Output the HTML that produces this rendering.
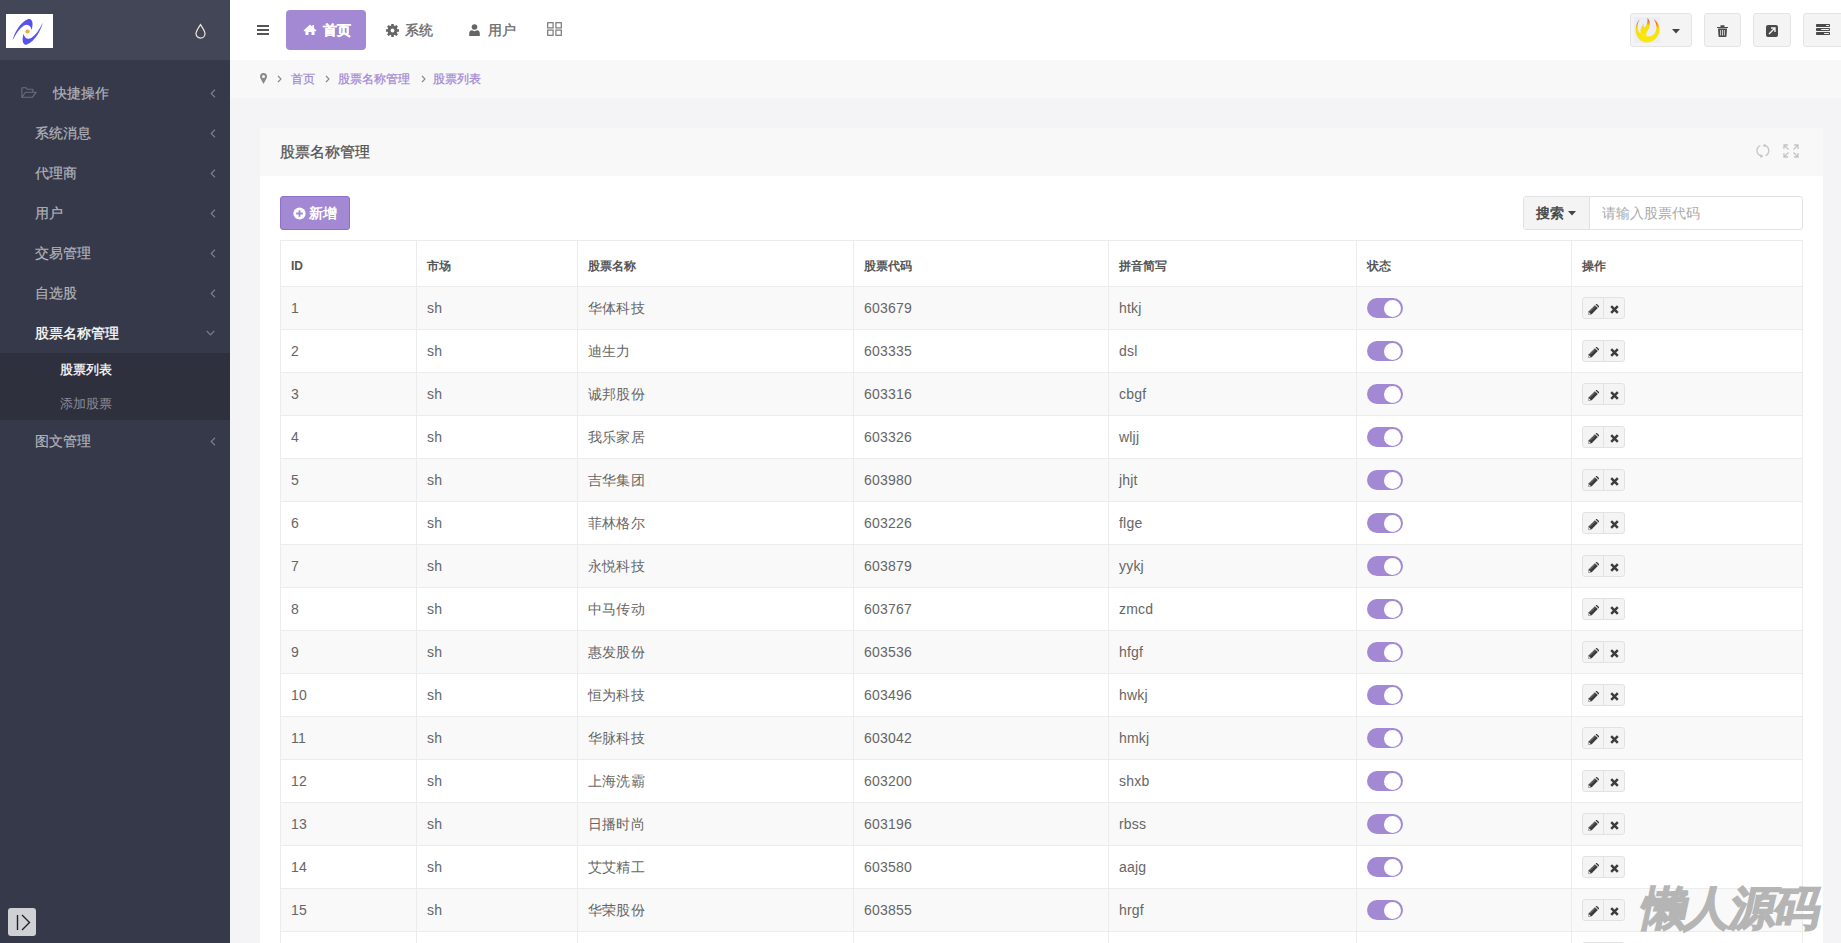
<!DOCTYPE html>
<html><head><meta charset="utf-8"><style>
*{box-sizing:border-box;margin:0;padding:0}
html,body{width:1841px;height:943px;overflow:hidden}
body{position:relative;background:#f4f4f6;font-family:"Liberation Sans",sans-serif;font-size:14px;color:#666}
.abs{position:absolute}
#side{position:absolute;left:0;top:0;width:230px;height:943px;background:#363949}
#logo{position:absolute;left:0;top:0;width:230px;height:60px;background:#434656}
#logo .box{position:absolute;left:6px;top:14px;width:47px;height:34px;background:#fff}
#logo .drop{position:absolute;left:194px;top:23px}
.mi{position:absolute;left:0;width:230px;height:40px;line-height:42px;color:#b2b3ba;font-size:14px;-webkit-text-stroke:.2px #b2b3ba}
.mi span{position:absolute;left:35px;top:0}
.mi .chev{position:absolute;left:210px;top:17px}
.mi.act span{color:#fff}
.sub{position:absolute;left:0;top:353px;width:230px;height:67px;background:#2e303e}
.si{position:absolute;left:60px;font-size:13px;height:34px;line-height:34px}
#tog{position:absolute;left:8px;top:908px;width:28px;height:28px;background:#d0d1d5;border-radius:3px}
#hdr{position:absolute;left:230px;top:0;width:1611px;height:60px;background:#fff}
.nav{position:absolute;top:10px;height:40px;line-height:40px;font-size:14px;color:#666}
.nav.act{background:#a389d4;color:#fff;border-radius:4px;font-weight:bold}
.hb{position:absolute;top:13px;height:34px;background:#f4f4f4;border:1px solid #e4e4e4;border-radius:3px}
#crumb{position:absolute;left:230px;top:60px;width:1611px;height:38px;background:#f8f8f9;font-size:12px;color:#a389d4;-webkit-text-stroke:.25px #a389d4}
#panel{position:absolute;left:260px;top:128px;width:1563px;height:815px;background:#fff}
#ph{position:absolute;left:0;top:0;width:1563px;height:48px;background:#f8f8f8}
#ph .t{position:absolute;left:20px;top:0;line-height:48px;font-size:15px;color:#555;-webkit-text-stroke:.3px #555}
#addbtn{position:absolute;left:280px;top:196px;width:70px;height:34px;background:#a389d4;border:1px solid #8d70cb;border-radius:3px;color:#fff;font-weight:bold;font-size:14px}
#search{position:absolute;left:1523px;top:196px;width:280px;height:34px;border:1px solid #e2e2e2;border-radius:3px;background:#fff}
#search .b{position:absolute;left:0;top:0;width:66px;height:32px;background:#f4f4f4;border-right:1px solid #e2e2e2;color:#444;line-height:32px;-webkit-text-stroke:.5px #444}
#search .p{position:absolute;left:78px;top:0;line-height:32px;color:#aaa}
.tbl{position:absolute;left:280px;top:240px;width:1523px;height:703px;border-left:1px solid #ececec;border-right:1px solid #ececec}
.thead{position:absolute;left:0;top:0;width:1521px;height:47px;border-top:1px solid #ececec;border-bottom:1px solid #ececec;background:#fff}
.th{position:absolute;top:3px;line-height:45px;font-size:12px;font-weight:bold;color:#555}
.vl{position:absolute;top:0;width:1px;height:100%;background:#ececec}
.tr{position:absolute;left:0;width:1521px;height:43px;border-bottom:1px solid #ececec;background:#fff}
.tr.odd{background:#f9f9f9}
.td{position:absolute;top:0;line-height:42px;font-size:14px;color:#666;letter-spacing:.2px}
.sw{position:absolute;top:11px;width:36px;height:20px;border-radius:10px;background:#a389d4}
.sw i{position:absolute;right:2px;top:1.5px;width:17px;height:17px;border-radius:50%;background:#fff}
.acts{position:absolute;top:10px;width:43px;height:22px;border:1px solid #e2e2e2;border-radius:3px;background:#f4f4f4}
.acts b{position:absolute;top:0;height:20px;width:21px;display:flex;align-items:center;justify-content:center;padding-top:2px}
.acts .ed{left:0;border-right:1px solid #e2e2e2}
.acts .rm{left:21px}
#wm{position:absolute;left:1642px;top:878px;font-size:46px;font-weight:900;color:#b5b5b5;letter-spacing:-1.5px;transform:skewX(-12deg);-webkit-text-stroke:1.6px #b5b5b5}

</style></head><body>
<div id="side">
  <div id="logo">
    <div class="box"><svg width="47" height="34" viewBox="0 0 47 34"><g fill="#5552ee"><path d="M6.4 26.8 C8 20 14 8 22.3 5.1 C26.2 3.7 27.8 9.5 25.5 15.9 C25 11.8 21.5 9.3 17.6 11.8 C13.5 14.5 10 19.5 6.4 26.8 Z"/><path d="M6.4 26.8 C8 20 14 8 22.3 5.1 C26.2 3.7 27.8 9.5 25.5 15.9 C25 11.8 21.5 9.3 17.6 11.8 C13.5 14.5 10 19.5 6.4 26.8 Z" transform="rotate(180 21.6 17.8)"/></g><circle cx="21.5" cy="17.5" r="2.1" fill="#e9aa45"/></svg></div>
    <div class="drop"><svg width="13" height="16" viewBox="0 0 13 16"><path d="M6.5 1.6 Q11 8.2 11 10.6 A4.5 4.5 0 0 1 2 10.6 Q2 8.2 6.5 1.6 Z" fill="none" stroke="#eeeae0" stroke-width="1.2"/></svg></div>
  </div>
  <div class="mi" style="top:72px"><svg class="abs" style="left:21px;top:15px" width="16" height="12" viewBox="0 0 16 12"><g fill="none" stroke="#6c6e7c" stroke-width="1.1" stroke-linejoin="round"><path d="M.9 10.3 V1.5 Q.9 .8 1.6 .8 H5.2 L6.2 2.2 H11.2 Q11.9 2.2 11.9 2.9 V5.2"/><path d="M.9 10.3 L4.5 5.2 H15.2 L11.4 10.3 Z"/></g></svg><span style="left:53px">快捷操作</span><svg class="chev" width="6" height="9" viewBox="0 0 6 9"><path d="M5 .8 L1.2 4.5 L5 8.2" fill="none" stroke="#7b7d8a" stroke-width="1.2"/></svg></div>
  <div class="mi" style="top:112px"><span>系统消息</span><svg class="chev" width="6" height="9" viewBox="0 0 6 9"><path d="M5 .8 L1.2 4.5 L5 8.2" fill="none" stroke="#7b7d8a" stroke-width="1.2"/></svg></div>
  <div class="mi" style="top:152px"><span>代理商</span><svg class="chev" width="6" height="9" viewBox="0 0 6 9"><path d="M5 .8 L1.2 4.5 L5 8.2" fill="none" stroke="#7b7d8a" stroke-width="1.2"/></svg></div>
  <div class="mi" style="top:192px"><span>用户</span><svg class="chev" width="6" height="9" viewBox="0 0 6 9"><path d="M5 .8 L1.2 4.5 L5 8.2" fill="none" stroke="#7b7d8a" stroke-width="1.2"/></svg></div>
  <div class="mi" style="top:232px"><span>交易管理</span><svg class="chev" width="6" height="9" viewBox="0 0 6 9"><path d="M5 .8 L1.2 4.5 L5 8.2" fill="none" stroke="#7b7d8a" stroke-width="1.2"/></svg></div>
  <div class="mi" style="top:272px"><span>自选股</span><svg class="chev" width="6" height="9" viewBox="0 0 6 9"><path d="M5 .8 L1.2 4.5 L5 8.2" fill="none" stroke="#7b7d8a" stroke-width="1.2"/></svg></div>
  <div class="mi act" style="top:312px"><span style="-webkit-text-stroke:.3px #fff">股票名称管理</span><svg class="abs" style="left:206px;top:18px" width="9" height="6" viewBox="0 0 9 6"><path d="M.8 1 L4.5 4.8 L8.2 1" fill="none" stroke="#7b7d8a" stroke-width="1.2"/></svg></div>
  <div class="sub">
    <div class="si" style="top:0;color:#fff;-webkit-text-stroke:.25px #fff">股票列表</div>
    <div class="si" style="top:34px;color:#8a8b94">添加股票</div>
  </div>
  <div class="mi" style="top:420px"><span>图文管理</span><svg class="chev" width="6" height="9" viewBox="0 0 6 9"><path d="M5 .8 L1.2 4.5 L5 8.2" fill="none" stroke="#7b7d8a" stroke-width="1.2"/></svg></div>
  <div id="tog"><svg class="abs" style="left:0;top:0" width="28" height="28" viewBox="0 0 28 28"><path d="M9.5 7 V22" stroke="#222" stroke-width="1.4"/><path d="M14 7 L21.5 14.5 L14 22" fill="none" stroke="#222" stroke-width="1.4"/></svg></div>
</div>

<div id="hdr">
  <svg class="abs" style="left:27px;top:25px" width="12" height="10" viewBox="0 0 12 10"><path d="M0 1 H12 M0 5 H12 M0 9 H12" stroke="#555" stroke-width="1.8"/></svg>
  <div class="nav act" style="left:56px;width:80px;-webkit-text-stroke:.3px #fff"><svg class="abs" style="left:17px;top:14px" width="14" height="11" viewBox="0 0 14 11"><path d="M7 .5 L.5 6.5 L1.6 7.5 L2.5 6.8 V11 H5.5 V8 H8.5 V11 H11.5 V6.8 L12.4 7.5 L13.5 6.5 L11 4.2 V1 H9.5 V2.8 Z" fill="#fff"/></svg><span class="abs" style="left:37px;top:0">首页</span></div>
  <div class="nav" style="left:156px;width:60px;-webkit-text-stroke:.3px #666"><svg class="abs" style="left:0;top:14px" width="13" height="13" viewBox="0 0 13 13"><g fill="#666"><circle cx="6.5" cy="6.5" r="4.9"/><rect x="5.2" y="-.1" width="2.6" height="13.2" rx=".5" transform="rotate(0 6.5 6.5)"/><rect x="5.2" y="-.1" width="2.6" height="13.2" rx=".5" transform="rotate(45 6.5 6.5)"/><rect x="5.2" y="-.1" width="2.6" height="13.2" rx=".5" transform="rotate(90 6.5 6.5)"/><rect x="5.2" y="-.1" width="2.6" height="13.2" rx=".5" transform="rotate(135 6.5 6.5)"/></g><circle cx="6.5" cy="6.5" r="1.9" fill="#fff"/></svg><span class="abs" style="left:19px;top:0">系统</span></div>
  <div class="nav" style="left:239px;width:60px;-webkit-text-stroke:.3px #666"><svg class="abs" style="left:0;top:14px" width="11" height="12" viewBox="0 0 11 12"><circle cx="5.5" cy="3" r="2.8" fill="#666"/><path d="M.2 12 V9.5 Q.2 6.5 3 6.3 L5.5 7.3 L8 6.3 Q10.8 6.5 10.8 9.5 V12 Z" fill="#666"/></svg><span class="abs" style="left:19px;top:0">用户</span></div>
  <svg class="abs" style="left:317px;top:22px" width="15" height="14" viewBox="0 0 15 14"><g fill="none" stroke="#777" stroke-width="1.2"><rect x=".7" y=".7" width="5.4" height="5.2"/><rect x="8.9" y=".7" width="5.4" height="5.2"/><rect x=".7" y="8.1" width="5.4" height="5.2"/><rect x="8.9" y="8.1" width="5.4" height="5.2"/></g></svg>
  <div class="hb" style="left:1400px;width:62px"><div class="abs" style="left:3px;top:3px;width:26px;height:26px;background:#eaeff6"><svg width="26" height="26" viewBox="0 0 26 26"><defs><linearGradient id="fl" x1="0" y1="0" x2="0" y2="1"><stop offset="0" stop-color="#e5480f"/><stop offset=".18" stop-color="#f07a14"/><stop offset=".4" stop-color="#fad80c"/><stop offset="1" stop-color="#fbea0a"/></linearGradient></defs><g fill="url(#fl)"><path d="M6 2 C1.5 6.5 .3 13 2.8 18.5 C5 23.5 9 25.5 13 25.5 C19 25.5 23.8 21 25.2 15 C26.2 10 24 5 19.7 2 C22.5 6 23.2 11 21.5 15 C19.5 19 16 20 13 19.5 C8.5 19 5 16.5 3.9 12.5 C3 9 3.8 5 6 2 Z"/><path d="M13.5 1 C16.5 4 17 9 13.8 13.5 C11.8 16 11.8 18 13.3 19.6 L7.8 19.6 C6 17 6 13.5 7.3 10.5 L9.6 6.6 C9.4 8.4 9.7 9.8 10.6 10.6 C13.2 8 13.8 4.2 13.5 1 Z"/></g></svg></div><svg class="abs" style="left:41px;top:15px" width="8" height="5" viewBox="0 0 8 5"><path d="M0 0 H8 L4 4.5 Z" fill="#444"/></svg></div>
  <div class="hb" style="left:1474px;width:37px"><svg class="abs" style="left:12px;top:11px" width="11" height="12" viewBox="0 0 11 12"><path d="M0 2 H11 V3 H0 Z M3.5 .2 H7.5 V2 H3.5 Z M1 3.5 H10 L9.5 11.2 Q9.4 12 8.6 12 H2.4 Q1.6 12 1.5 11.2 Z" fill="#4a4a4a"/><path d="M3.6 5 V10.5 M5.5 5 V10.5 M7.4 5 V10.5" stroke="#f4f4f4" stroke-width=".8"/></svg></div>
  <div class="hb" style="left:1523px;width:38px"><svg class="abs" style="left:12px;top:11px" width="12" height="12" viewBox="0 0 12 12"><rect x="0" y="0" width="12" height="12" rx="2" fill="#4a4a4a"/><path d="M3 9 L8.5 3.5 M5 3 H9 V7" fill="none" stroke="#f4f4f4" stroke-width="1.4"/></svg></div>
  <div class="hb" style="left:1573px;width:50px"><svg class="abs" style="left:12px;top:10px" width="14" height="12" viewBox="0 0 14 12"><g fill="#4a4a4a"><rect x="0" y="0" width="14" height="3" rx=".8"/><rect x="0" y="4" width="14" height="3" rx=".8"/><rect x="0" y="8" width="14" height="3" rx=".8"/></g><g fill="#f4f4f4"><rect x="10" y="1" width="3" height="1" rx=".5"/><rect x="5" y="5" width="8" height="1" rx=".5"/><rect x="8" y="9" width="5" height="1" rx=".5"/></g></svg></div>
</div>

<div id="crumb">
  <svg class="abs" style="left:30px;top:13px" width="7" height="11" viewBox="0 0 7 11"><path d="M3.5 11 L.8 6 Q0 4.6 0 3.5 A3.5 3.5 0 0 1 7 3.5 Q7 4.6 6.2 6 Z" fill="#8a8a8a"/><circle cx="3.5" cy="3.4" r="1.5" fill="#f8f8f9"/></svg>
  <svg class="abs" style="left:47px;top:15px" width="5" height="8" viewBox="0 0 5 8"><path d="M1 1 L4 4 L1 7" fill="none" stroke="#888" stroke-width="1.1"/></svg>
  <span class="abs" style="left:61px;top:11px">首页</span>
  <svg class="abs" style="left:95px;top:15px" width="5" height="8" viewBox="0 0 5 8"><path d="M1 1 L4 4 L1 7" fill="none" stroke="#888" stroke-width="1.1"/></svg>
  <span class="abs" style="left:108px;top:11px">股票名称管理</span>
  <svg class="abs" style="left:191px;top:15px" width="5" height="8" viewBox="0 0 5 8"><path d="M1 1 L4 4 L1 7" fill="none" stroke="#888" stroke-width="1.1"/></svg>
  <span class="abs" style="left:203px;top:11px">股票列表</span>
</div>

<div id="panel">
  <div id="ph"><div class="t">股票名称管理</div>
    <svg class="abs" style="left:1496px;top:16px" width="14" height="14" viewBox="0 0 14 14"><g fill="none" stroke="#c4c4c4" stroke-width="1.3"><path d="M4.3 1.5 A5.5 5.5 0 0 0 5.2 11.9"/><path d="M9.7 11.6 A5.5 5.5 0 0 0 8.8 1.4"/></g><path d="M7.4 12.2 L4.4 10 L4.4 14 Z M6.6 1.3 L9.4 -.4 L9.4 3.4 Z" fill="#c4c4c4"/></svg>
    <svg class="abs" style="left:1523px;top:16px" width="16" height="14" viewBox="0 0 16 14"><g fill="none" stroke="#c4c4c4" stroke-width="1.3"><path d="M1 5 V1 H5 M1 1 L5.5 5.5"/><path d="M15 5 V1 H11 M15 1 L10.5 5.5"/><path d="M1 9 V13 H5 M1 13 L5.5 8.5"/><path d="M15 9 V13 H11 M15 13 L10.5 8.5"/></g></svg>
  </div>
</div>

<div id="addbtn"><svg class="abs" style="left:11.5px;top:9.5px" width="13" height="13" viewBox="0 0 13 13"><circle cx="6.5" cy="6.5" r="6.1" fill="#fff"/><path d="M6.5 3.2 V9.8 M3.2 6.5 H9.8" stroke="#a389d4" stroke-width="1.8"/></svg><span class="abs" style="left:28px;top:0;line-height:33px">新增</span></div>

<div id="search"><div class="b"><span class="abs" style="left:12px;top:0">搜索</span><svg class="abs" style="left:44px;top:14px" width="8" height="5" viewBox="0 0 8 5"><path d="M0 0 H8 L4 4.5 Z" fill="#444"/></svg></div><div class="p">请输入股票代码</div></div>

<div class="tbl">
<div class="thead">
<div class="th" style="left:10px">ID</div>
<div class="th" style="left:146px">市场</div>
<div class="th" style="left:307px">股票名称</div>
<div class="th" style="left:583px">股票代码</div>
<div class="th" style="left:838px">拼音简写</div>
<div class="th" style="left:1086px">状态</div>
<div class="th" style="left:1301px">操作</div>
<div class="vl" style="left:135px"></div>
<div class="vl" style="left:296px"></div>
<div class="vl" style="left:572px"></div>
<div class="vl" style="left:827px"></div>
<div class="vl" style="left:1075px"></div>
<div class="vl" style="left:1290px"></div>
</div>
<div class="tr odd" style="top:47px">
<div class="vl" style="left:135px"></div>
<div class="vl" style="left:296px"></div>
<div class="vl" style="left:572px"></div>
<div class="vl" style="left:827px"></div>
<div class="vl" style="left:1075px"></div>
<div class="vl" style="left:1290px"></div>
<div class="td" style="left:10px">1</div>
<div class="td" style="left:146px">sh</div>
<div class="td" style="left:307px">华体科技</div>
<div class="td" style="left:583px">603679</div>
<div class="td" style="left:838px">htkj</div>
<div class="sw" style="left:1086px"><i></i></div>
<div class="acts" style="left:1301px"><b class="ed"><svg width="11" height="11" viewBox="0 0 11 11"><path d="M.3 10.7 L.8 7.3 L6.9 1.2 L9.8 4.1 L3.7 10.2 Z" fill="#3a3a3a"/><path d="M7.6 .5 L8.1 0 Q8.5 -.3 8.9 0 L11 2.1 Q11.3 2.5 11 2.9 L10.5 3.4 Z" fill="#3a3a3a"/><path d="M1.9 7.6 L7.3 2.2" stroke="#cfcfcf" stroke-width=".45"/><path d="M.9 8.3 L2.7 10.1 L.6 10.4 Z" fill="#f2f2f2"/></svg></b><b class="rm"><svg width="9" height="9" viewBox="0 0 9 9"><path d="M1.2 1.2 L7.8 7.8 M7.8 1.2 L1.2 7.8" stroke="#3c3c3c" stroke-width="2.5"/></svg></b></div>
</div>
<div class="tr" style="top:90px">
<div class="vl" style="left:135px"></div>
<div class="vl" style="left:296px"></div>
<div class="vl" style="left:572px"></div>
<div class="vl" style="left:827px"></div>
<div class="vl" style="left:1075px"></div>
<div class="vl" style="left:1290px"></div>
<div class="td" style="left:10px">2</div>
<div class="td" style="left:146px">sh</div>
<div class="td" style="left:307px">迪生力</div>
<div class="td" style="left:583px">603335</div>
<div class="td" style="left:838px">dsl</div>
<div class="sw" style="left:1086px"><i></i></div>
<div class="acts" style="left:1301px"><b class="ed"><svg width="11" height="11" viewBox="0 0 11 11"><path d="M.3 10.7 L.8 7.3 L6.9 1.2 L9.8 4.1 L3.7 10.2 Z" fill="#3a3a3a"/><path d="M7.6 .5 L8.1 0 Q8.5 -.3 8.9 0 L11 2.1 Q11.3 2.5 11 2.9 L10.5 3.4 Z" fill="#3a3a3a"/><path d="M1.9 7.6 L7.3 2.2" stroke="#cfcfcf" stroke-width=".45"/><path d="M.9 8.3 L2.7 10.1 L.6 10.4 Z" fill="#f2f2f2"/></svg></b><b class="rm"><svg width="9" height="9" viewBox="0 0 9 9"><path d="M1.2 1.2 L7.8 7.8 M7.8 1.2 L1.2 7.8" stroke="#3c3c3c" stroke-width="2.5"/></svg></b></div>
</div>
<div class="tr odd" style="top:133px">
<div class="vl" style="left:135px"></div>
<div class="vl" style="left:296px"></div>
<div class="vl" style="left:572px"></div>
<div class="vl" style="left:827px"></div>
<div class="vl" style="left:1075px"></div>
<div class="vl" style="left:1290px"></div>
<div class="td" style="left:10px">3</div>
<div class="td" style="left:146px">sh</div>
<div class="td" style="left:307px">诚邦股份</div>
<div class="td" style="left:583px">603316</div>
<div class="td" style="left:838px">cbgf</div>
<div class="sw" style="left:1086px"><i></i></div>
<div class="acts" style="left:1301px"><b class="ed"><svg width="11" height="11" viewBox="0 0 11 11"><path d="M.3 10.7 L.8 7.3 L6.9 1.2 L9.8 4.1 L3.7 10.2 Z" fill="#3a3a3a"/><path d="M7.6 .5 L8.1 0 Q8.5 -.3 8.9 0 L11 2.1 Q11.3 2.5 11 2.9 L10.5 3.4 Z" fill="#3a3a3a"/><path d="M1.9 7.6 L7.3 2.2" stroke="#cfcfcf" stroke-width=".45"/><path d="M.9 8.3 L2.7 10.1 L.6 10.4 Z" fill="#f2f2f2"/></svg></b><b class="rm"><svg width="9" height="9" viewBox="0 0 9 9"><path d="M1.2 1.2 L7.8 7.8 M7.8 1.2 L1.2 7.8" stroke="#3c3c3c" stroke-width="2.5"/></svg></b></div>
</div>
<div class="tr" style="top:176px">
<div class="vl" style="left:135px"></div>
<div class="vl" style="left:296px"></div>
<div class="vl" style="left:572px"></div>
<div class="vl" style="left:827px"></div>
<div class="vl" style="left:1075px"></div>
<div class="vl" style="left:1290px"></div>
<div class="td" style="left:10px">4</div>
<div class="td" style="left:146px">sh</div>
<div class="td" style="left:307px">我乐家居</div>
<div class="td" style="left:583px">603326</div>
<div class="td" style="left:838px">wljj</div>
<div class="sw" style="left:1086px"><i></i></div>
<div class="acts" style="left:1301px"><b class="ed"><svg width="11" height="11" viewBox="0 0 11 11"><path d="M.3 10.7 L.8 7.3 L6.9 1.2 L9.8 4.1 L3.7 10.2 Z" fill="#3a3a3a"/><path d="M7.6 .5 L8.1 0 Q8.5 -.3 8.9 0 L11 2.1 Q11.3 2.5 11 2.9 L10.5 3.4 Z" fill="#3a3a3a"/><path d="M1.9 7.6 L7.3 2.2" stroke="#cfcfcf" stroke-width=".45"/><path d="M.9 8.3 L2.7 10.1 L.6 10.4 Z" fill="#f2f2f2"/></svg></b><b class="rm"><svg width="9" height="9" viewBox="0 0 9 9"><path d="M1.2 1.2 L7.8 7.8 M7.8 1.2 L1.2 7.8" stroke="#3c3c3c" stroke-width="2.5"/></svg></b></div>
</div>
<div class="tr odd" style="top:219px">
<div class="vl" style="left:135px"></div>
<div class="vl" style="left:296px"></div>
<div class="vl" style="left:572px"></div>
<div class="vl" style="left:827px"></div>
<div class="vl" style="left:1075px"></div>
<div class="vl" style="left:1290px"></div>
<div class="td" style="left:10px">5</div>
<div class="td" style="left:146px">sh</div>
<div class="td" style="left:307px">吉华集团</div>
<div class="td" style="left:583px">603980</div>
<div class="td" style="left:838px">jhjt</div>
<div class="sw" style="left:1086px"><i></i></div>
<div class="acts" style="left:1301px"><b class="ed"><svg width="11" height="11" viewBox="0 0 11 11"><path d="M.3 10.7 L.8 7.3 L6.9 1.2 L9.8 4.1 L3.7 10.2 Z" fill="#3a3a3a"/><path d="M7.6 .5 L8.1 0 Q8.5 -.3 8.9 0 L11 2.1 Q11.3 2.5 11 2.9 L10.5 3.4 Z" fill="#3a3a3a"/><path d="M1.9 7.6 L7.3 2.2" stroke="#cfcfcf" stroke-width=".45"/><path d="M.9 8.3 L2.7 10.1 L.6 10.4 Z" fill="#f2f2f2"/></svg></b><b class="rm"><svg width="9" height="9" viewBox="0 0 9 9"><path d="M1.2 1.2 L7.8 7.8 M7.8 1.2 L1.2 7.8" stroke="#3c3c3c" stroke-width="2.5"/></svg></b></div>
</div>
<div class="tr" style="top:262px">
<div class="vl" style="left:135px"></div>
<div class="vl" style="left:296px"></div>
<div class="vl" style="left:572px"></div>
<div class="vl" style="left:827px"></div>
<div class="vl" style="left:1075px"></div>
<div class="vl" style="left:1290px"></div>
<div class="td" style="left:10px">6</div>
<div class="td" style="left:146px">sh</div>
<div class="td" style="left:307px">菲林格尔</div>
<div class="td" style="left:583px">603226</div>
<div class="td" style="left:838px">flge</div>
<div class="sw" style="left:1086px"><i></i></div>
<div class="acts" style="left:1301px"><b class="ed"><svg width="11" height="11" viewBox="0 0 11 11"><path d="M.3 10.7 L.8 7.3 L6.9 1.2 L9.8 4.1 L3.7 10.2 Z" fill="#3a3a3a"/><path d="M7.6 .5 L8.1 0 Q8.5 -.3 8.9 0 L11 2.1 Q11.3 2.5 11 2.9 L10.5 3.4 Z" fill="#3a3a3a"/><path d="M1.9 7.6 L7.3 2.2" stroke="#cfcfcf" stroke-width=".45"/><path d="M.9 8.3 L2.7 10.1 L.6 10.4 Z" fill="#f2f2f2"/></svg></b><b class="rm"><svg width="9" height="9" viewBox="0 0 9 9"><path d="M1.2 1.2 L7.8 7.8 M7.8 1.2 L1.2 7.8" stroke="#3c3c3c" stroke-width="2.5"/></svg></b></div>
</div>
<div class="tr odd" style="top:305px">
<div class="vl" style="left:135px"></div>
<div class="vl" style="left:296px"></div>
<div class="vl" style="left:572px"></div>
<div class="vl" style="left:827px"></div>
<div class="vl" style="left:1075px"></div>
<div class="vl" style="left:1290px"></div>
<div class="td" style="left:10px">7</div>
<div class="td" style="left:146px">sh</div>
<div class="td" style="left:307px">永悦科技</div>
<div class="td" style="left:583px">603879</div>
<div class="td" style="left:838px">yykj</div>
<div class="sw" style="left:1086px"><i></i></div>
<div class="acts" style="left:1301px"><b class="ed"><svg width="11" height="11" viewBox="0 0 11 11"><path d="M.3 10.7 L.8 7.3 L6.9 1.2 L9.8 4.1 L3.7 10.2 Z" fill="#3a3a3a"/><path d="M7.6 .5 L8.1 0 Q8.5 -.3 8.9 0 L11 2.1 Q11.3 2.5 11 2.9 L10.5 3.4 Z" fill="#3a3a3a"/><path d="M1.9 7.6 L7.3 2.2" stroke="#cfcfcf" stroke-width=".45"/><path d="M.9 8.3 L2.7 10.1 L.6 10.4 Z" fill="#f2f2f2"/></svg></b><b class="rm"><svg width="9" height="9" viewBox="0 0 9 9"><path d="M1.2 1.2 L7.8 7.8 M7.8 1.2 L1.2 7.8" stroke="#3c3c3c" stroke-width="2.5"/></svg></b></div>
</div>
<div class="tr" style="top:348px">
<div class="vl" style="left:135px"></div>
<div class="vl" style="left:296px"></div>
<div class="vl" style="left:572px"></div>
<div class="vl" style="left:827px"></div>
<div class="vl" style="left:1075px"></div>
<div class="vl" style="left:1290px"></div>
<div class="td" style="left:10px">8</div>
<div class="td" style="left:146px">sh</div>
<div class="td" style="left:307px">中马传动</div>
<div class="td" style="left:583px">603767</div>
<div class="td" style="left:838px">zmcd</div>
<div class="sw" style="left:1086px"><i></i></div>
<div class="acts" style="left:1301px"><b class="ed"><svg width="11" height="11" viewBox="0 0 11 11"><path d="M.3 10.7 L.8 7.3 L6.9 1.2 L9.8 4.1 L3.7 10.2 Z" fill="#3a3a3a"/><path d="M7.6 .5 L8.1 0 Q8.5 -.3 8.9 0 L11 2.1 Q11.3 2.5 11 2.9 L10.5 3.4 Z" fill="#3a3a3a"/><path d="M1.9 7.6 L7.3 2.2" stroke="#cfcfcf" stroke-width=".45"/><path d="M.9 8.3 L2.7 10.1 L.6 10.4 Z" fill="#f2f2f2"/></svg></b><b class="rm"><svg width="9" height="9" viewBox="0 0 9 9"><path d="M1.2 1.2 L7.8 7.8 M7.8 1.2 L1.2 7.8" stroke="#3c3c3c" stroke-width="2.5"/></svg></b></div>
</div>
<div class="tr odd" style="top:391px">
<div class="vl" style="left:135px"></div>
<div class="vl" style="left:296px"></div>
<div class="vl" style="left:572px"></div>
<div class="vl" style="left:827px"></div>
<div class="vl" style="left:1075px"></div>
<div class="vl" style="left:1290px"></div>
<div class="td" style="left:10px">9</div>
<div class="td" style="left:146px">sh</div>
<div class="td" style="left:307px">惠发股份</div>
<div class="td" style="left:583px">603536</div>
<div class="td" style="left:838px">hfgf</div>
<div class="sw" style="left:1086px"><i></i></div>
<div class="acts" style="left:1301px"><b class="ed"><svg width="11" height="11" viewBox="0 0 11 11"><path d="M.3 10.7 L.8 7.3 L6.9 1.2 L9.8 4.1 L3.7 10.2 Z" fill="#3a3a3a"/><path d="M7.6 .5 L8.1 0 Q8.5 -.3 8.9 0 L11 2.1 Q11.3 2.5 11 2.9 L10.5 3.4 Z" fill="#3a3a3a"/><path d="M1.9 7.6 L7.3 2.2" stroke="#cfcfcf" stroke-width=".45"/><path d="M.9 8.3 L2.7 10.1 L.6 10.4 Z" fill="#f2f2f2"/></svg></b><b class="rm"><svg width="9" height="9" viewBox="0 0 9 9"><path d="M1.2 1.2 L7.8 7.8 M7.8 1.2 L1.2 7.8" stroke="#3c3c3c" stroke-width="2.5"/></svg></b></div>
</div>
<div class="tr" style="top:434px">
<div class="vl" style="left:135px"></div>
<div class="vl" style="left:296px"></div>
<div class="vl" style="left:572px"></div>
<div class="vl" style="left:827px"></div>
<div class="vl" style="left:1075px"></div>
<div class="vl" style="left:1290px"></div>
<div class="td" style="left:10px">10</div>
<div class="td" style="left:146px">sh</div>
<div class="td" style="left:307px">恒为科技</div>
<div class="td" style="left:583px">603496</div>
<div class="td" style="left:838px">hwkj</div>
<div class="sw" style="left:1086px"><i></i></div>
<div class="acts" style="left:1301px"><b class="ed"><svg width="11" height="11" viewBox="0 0 11 11"><path d="M.3 10.7 L.8 7.3 L6.9 1.2 L9.8 4.1 L3.7 10.2 Z" fill="#3a3a3a"/><path d="M7.6 .5 L8.1 0 Q8.5 -.3 8.9 0 L11 2.1 Q11.3 2.5 11 2.9 L10.5 3.4 Z" fill="#3a3a3a"/><path d="M1.9 7.6 L7.3 2.2" stroke="#cfcfcf" stroke-width=".45"/><path d="M.9 8.3 L2.7 10.1 L.6 10.4 Z" fill="#f2f2f2"/></svg></b><b class="rm"><svg width="9" height="9" viewBox="0 0 9 9"><path d="M1.2 1.2 L7.8 7.8 M7.8 1.2 L1.2 7.8" stroke="#3c3c3c" stroke-width="2.5"/></svg></b></div>
</div>
<div class="tr odd" style="top:477px">
<div class="vl" style="left:135px"></div>
<div class="vl" style="left:296px"></div>
<div class="vl" style="left:572px"></div>
<div class="vl" style="left:827px"></div>
<div class="vl" style="left:1075px"></div>
<div class="vl" style="left:1290px"></div>
<div class="td" style="left:10px">11</div>
<div class="td" style="left:146px">sh</div>
<div class="td" style="left:307px">华脉科技</div>
<div class="td" style="left:583px">603042</div>
<div class="td" style="left:838px">hmkj</div>
<div class="sw" style="left:1086px"><i></i></div>
<div class="acts" style="left:1301px"><b class="ed"><svg width="11" height="11" viewBox="0 0 11 11"><path d="M.3 10.7 L.8 7.3 L6.9 1.2 L9.8 4.1 L3.7 10.2 Z" fill="#3a3a3a"/><path d="M7.6 .5 L8.1 0 Q8.5 -.3 8.9 0 L11 2.1 Q11.3 2.5 11 2.9 L10.5 3.4 Z" fill="#3a3a3a"/><path d="M1.9 7.6 L7.3 2.2" stroke="#cfcfcf" stroke-width=".45"/><path d="M.9 8.3 L2.7 10.1 L.6 10.4 Z" fill="#f2f2f2"/></svg></b><b class="rm"><svg width="9" height="9" viewBox="0 0 9 9"><path d="M1.2 1.2 L7.8 7.8 M7.8 1.2 L1.2 7.8" stroke="#3c3c3c" stroke-width="2.5"/></svg></b></div>
</div>
<div class="tr" style="top:520px">
<div class="vl" style="left:135px"></div>
<div class="vl" style="left:296px"></div>
<div class="vl" style="left:572px"></div>
<div class="vl" style="left:827px"></div>
<div class="vl" style="left:1075px"></div>
<div class="vl" style="left:1290px"></div>
<div class="td" style="left:10px">12</div>
<div class="td" style="left:146px">sh</div>
<div class="td" style="left:307px">上海洗霸</div>
<div class="td" style="left:583px">603200</div>
<div class="td" style="left:838px">shxb</div>
<div class="sw" style="left:1086px"><i></i></div>
<div class="acts" style="left:1301px"><b class="ed"><svg width="11" height="11" viewBox="0 0 11 11"><path d="M.3 10.7 L.8 7.3 L6.9 1.2 L9.8 4.1 L3.7 10.2 Z" fill="#3a3a3a"/><path d="M7.6 .5 L8.1 0 Q8.5 -.3 8.9 0 L11 2.1 Q11.3 2.5 11 2.9 L10.5 3.4 Z" fill="#3a3a3a"/><path d="M1.9 7.6 L7.3 2.2" stroke="#cfcfcf" stroke-width=".45"/><path d="M.9 8.3 L2.7 10.1 L.6 10.4 Z" fill="#f2f2f2"/></svg></b><b class="rm"><svg width="9" height="9" viewBox="0 0 9 9"><path d="M1.2 1.2 L7.8 7.8 M7.8 1.2 L1.2 7.8" stroke="#3c3c3c" stroke-width="2.5"/></svg></b></div>
</div>
<div class="tr odd" style="top:563px">
<div class="vl" style="left:135px"></div>
<div class="vl" style="left:296px"></div>
<div class="vl" style="left:572px"></div>
<div class="vl" style="left:827px"></div>
<div class="vl" style="left:1075px"></div>
<div class="vl" style="left:1290px"></div>
<div class="td" style="left:10px">13</div>
<div class="td" style="left:146px">sh</div>
<div class="td" style="left:307px">日播时尚</div>
<div class="td" style="left:583px">603196</div>
<div class="td" style="left:838px">rbss</div>
<div class="sw" style="left:1086px"><i></i></div>
<div class="acts" style="left:1301px"><b class="ed"><svg width="11" height="11" viewBox="0 0 11 11"><path d="M.3 10.7 L.8 7.3 L6.9 1.2 L9.8 4.1 L3.7 10.2 Z" fill="#3a3a3a"/><path d="M7.6 .5 L8.1 0 Q8.5 -.3 8.9 0 L11 2.1 Q11.3 2.5 11 2.9 L10.5 3.4 Z" fill="#3a3a3a"/><path d="M1.9 7.6 L7.3 2.2" stroke="#cfcfcf" stroke-width=".45"/><path d="M.9 8.3 L2.7 10.1 L.6 10.4 Z" fill="#f2f2f2"/></svg></b><b class="rm"><svg width="9" height="9" viewBox="0 0 9 9"><path d="M1.2 1.2 L7.8 7.8 M7.8 1.2 L1.2 7.8" stroke="#3c3c3c" stroke-width="2.5"/></svg></b></div>
</div>
<div class="tr" style="top:606px">
<div class="vl" style="left:135px"></div>
<div class="vl" style="left:296px"></div>
<div class="vl" style="left:572px"></div>
<div class="vl" style="left:827px"></div>
<div class="vl" style="left:1075px"></div>
<div class="vl" style="left:1290px"></div>
<div class="td" style="left:10px">14</div>
<div class="td" style="left:146px">sh</div>
<div class="td" style="left:307px">艾艾精工</div>
<div class="td" style="left:583px">603580</div>
<div class="td" style="left:838px">aajg</div>
<div class="sw" style="left:1086px"><i></i></div>
<div class="acts" style="left:1301px"><b class="ed"><svg width="11" height="11" viewBox="0 0 11 11"><path d="M.3 10.7 L.8 7.3 L6.9 1.2 L9.8 4.1 L3.7 10.2 Z" fill="#3a3a3a"/><path d="M7.6 .5 L8.1 0 Q8.5 -.3 8.9 0 L11 2.1 Q11.3 2.5 11 2.9 L10.5 3.4 Z" fill="#3a3a3a"/><path d="M1.9 7.6 L7.3 2.2" stroke="#cfcfcf" stroke-width=".45"/><path d="M.9 8.3 L2.7 10.1 L.6 10.4 Z" fill="#f2f2f2"/></svg></b><b class="rm"><svg width="9" height="9" viewBox="0 0 9 9"><path d="M1.2 1.2 L7.8 7.8 M7.8 1.2 L1.2 7.8" stroke="#3c3c3c" stroke-width="2.5"/></svg></b></div>
</div>
<div class="tr odd" style="top:649px">
<div class="vl" style="left:135px"></div>
<div class="vl" style="left:296px"></div>
<div class="vl" style="left:572px"></div>
<div class="vl" style="left:827px"></div>
<div class="vl" style="left:1075px"></div>
<div class="vl" style="left:1290px"></div>
<div class="td" style="left:10px">15</div>
<div class="td" style="left:146px">sh</div>
<div class="td" style="left:307px">华荣股份</div>
<div class="td" style="left:583px">603855</div>
<div class="td" style="left:838px">hrgf</div>
<div class="sw" style="left:1086px"><i></i></div>
<div class="acts" style="left:1301px"><b class="ed"><svg width="11" height="11" viewBox="0 0 11 11"><path d="M.3 10.7 L.8 7.3 L6.9 1.2 L9.8 4.1 L3.7 10.2 Z" fill="#3a3a3a"/><path d="M7.6 .5 L8.1 0 Q8.5 -.3 8.9 0 L11 2.1 Q11.3 2.5 11 2.9 L10.5 3.4 Z" fill="#3a3a3a"/><path d="M1.9 7.6 L7.3 2.2" stroke="#cfcfcf" stroke-width=".45"/><path d="M.9 8.3 L2.7 10.1 L.6 10.4 Z" fill="#f2f2f2"/></svg></b><b class="rm"><svg width="9" height="9" viewBox="0 0 9 9"><path d="M1.2 1.2 L7.8 7.8 M7.8 1.2 L1.2 7.8" stroke="#3c3c3c" stroke-width="2.5"/></svg></b></div>
</div>
<div class="tr" style="top:692px">
<div class="vl" style="left:135px"></div>
<div class="vl" style="left:296px"></div>
<div class="vl" style="left:572px"></div>
<div class="vl" style="left:827px"></div>
<div class="vl" style="left:1075px"></div>
<div class="vl" style="left:1290px"></div>
<div class="acts" style="left:1301px"><b class="ed"><svg width="11" height="11" viewBox="0 0 11 11"><path d="M.3 10.7 L.8 7.3 L6.9 1.2 L9.8 4.1 L3.7 10.2 Z" fill="#3a3a3a"/><path d="M7.6 .5 L8.1 0 Q8.5 -.3 8.9 0 L11 2.1 Q11.3 2.5 11 2.9 L10.5 3.4 Z" fill="#3a3a3a"/><path d="M1.9 7.6 L7.3 2.2" stroke="#cfcfcf" stroke-width=".45"/><path d="M.9 8.3 L2.7 10.1 L.6 10.4 Z" fill="#f2f2f2"/></svg></b><b class="rm"><svg width="9" height="9" viewBox="0 0 9 9"><path d="M1.2 1.2 L7.8 7.8 M7.8 1.2 L1.2 7.8" stroke="#3c3c3c" stroke-width="2.5"/></svg></b></div>
</div>
</div>

<div id="wm">懒人源码</div>

</body></html>
